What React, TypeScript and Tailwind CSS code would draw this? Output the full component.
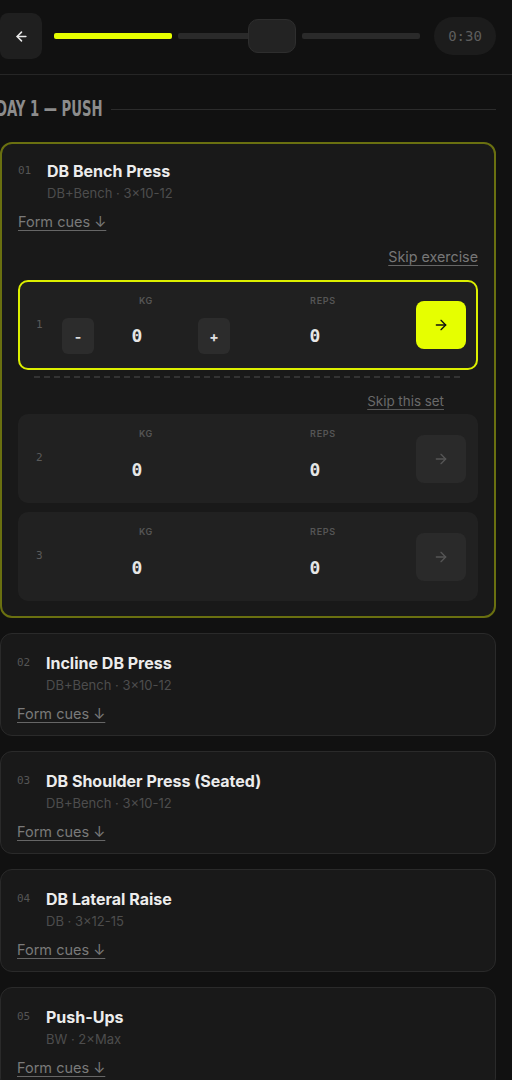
import { ArrowLeft, ArrowRight } from 'lucide-react'

type Exercise = { no: string; name: string; meta: string }

const exercises: Exercise[] = [
    { no: '01', name: 'DB Bench Press', meta: 'DB+Bench · 3×10-12' },
    { no: '02', name: 'Incline DB Press', meta: 'DB+Bench · 3×10-12' },
    { no: '03', name: 'DB Shoulder Press (Seated)', meta: 'DB+Bench · 3×10-12' },
    { no: '04', name: 'DB Lateral Raise', meta: 'DB · 3×12-15' },
    { no: '05', name: 'Push-Ups', meta: 'BW · 2×Max' },
]

const mono = "font-['DejaVu_Sans_Mono','Liberation_Mono',monospace]"

function ExerciseHeader({ ex }: { ex: Exercise }) {
    return (
        <div>
            <div className="flex items-center">
                <span className={`w-[29px] text-[11px] text-[#555] ${mono}`}>{ex.no}</span>
                <span className="text-[16px] leading-[20px] font-bold text-[#ececec]">{ex.name}</span>
            </div>
            <div className="mt-[4px] pl-[29px] text-[13px] leading-[16px] text-[#4d4d4d]">{ex.meta}</div>
            <div className="mt-[12px] text-[14.5px] leading-[18px] text-[#7a7a7a] underline underline-offset-[3px] decoration-[#666]">
                Form cues ↓
            </div>
        </div>
    )
}

function Stepper({ sign, show }: { sign: string; show: boolean }) {
    return (
        <div
            className={`flex h-[36px] w-[32px] items-center justify-center rounded-[6px] bg-[#2c2c2c] text-[14px] font-bold text-[#e0e0e0] ${show ? '' : 'invisible'}`}
        >
            {sign}
        </div>
    )
}

function SetRow({ n, active }: { n: number; active?: boolean }) {
    return (
        <div
            className={`flex items-center rounded-[10px] border-2 pl-[16px] pr-[10px] ${
                active ? 'h-[90px] border-[#dcef00] bg-[#202020]' : 'h-[89px] border-transparent bg-[#212121]'
            }`}
        >
            <span className={`w-[26px] text-[11px] text-[#5a5a5a] ${mono}`}>{n}</span>
            <div className="flex w-[168px] flex-col pb-[2px]">
                <span className="text-center text-[9px] font-semibold tracking-[0.08em] text-[#555]">KG</span>
                <div className="mt-[11px] flex items-center">
                    <Stepper sign="-" show={!!active} />
                    <span className={`flex-1 pr-[18px] text-center text-[18px] leading-[22px] font-bold text-[#e6e6e6] ${mono}`}>0</span>
                    <Stepper sign="+" show={!!active} />
                </div>
            </div>
            <div className="flex flex-1 flex-col pb-[2px]">
                <span className="text-center text-[9px] font-semibold tracking-[0.08em] text-[#555]">REPS</span>
                <div className="mt-[11px] flex h-[36px] items-center justify-center">
                    <span className={`pr-[16px] text-[18px] leading-[22px] font-bold text-[#e6e6e6] ${mono}`}>0</span>
                </div>
            </div>
            <div
                className={`flex h-[48px] w-[50px] items-center justify-center rounded-[8px] ${
                    active ? 'bg-[#e6ff00] text-[#111]' : 'bg-[#2a2a2a] text-[#555]'
                }`}
            >
                <ArrowRight size={16} strokeWidth={2} />
            </div>
        </div>
    )
}

export default function App() {
    return (
        <div className="min-h-screen w-[512px] overflow-hidden bg-[#111111] font-['Inter','Noto_Sans',sans-serif]">
            {/* top bar */}
            <div className="flex h-[75px] items-center border-b border-[#262626] pr-4 pb-[2px]">
                <button className="flex h-[46px] w-[42px] items-center justify-center rounded-r-[10px] rounded-l-[8px] bg-[#1f1f1f] text-[#e8e8e8]">
                    <ArrowLeft size={15} strokeWidth={2.5} />
                </button>
                <div className="relative ml-[12px] flex w-[366px] items-center gap-[6px]">
                    <div className="h-[6px] flex-1 rounded-[2px] bg-[#e6ff00]" />
                    <div className="h-[6px] flex-1 rounded-[2px] bg-[#2a2a2a]" />
                    <div className="h-[6px] flex-1 rounded-[2px] bg-[#2a2a2a]" />
                    <div className="absolute top-1/2 left-[194px] h-[34px] w-[48px] -translate-y-1/2 rounded-[10px] border border-[#2e2e2e] bg-[#232323]" />
                </div>
                <div className={`ml-auto flex h-[38px] w-[62px] items-center justify-center rounded-full bg-[#1c1c1c] text-[14px] text-[#5e5e5e] ${mono}`}>
                    0:30
                </div>
            </div>

            {/* day heading */}
            <div className="mt-[22px] flex items-center gap-3 pr-4">
                <div className="-ml-[4px] w-[103px] shrink-0 whitespace-nowrap">
                    <span className="inline-block origin-left scale-x-[0.7] font-['DejaVu_Sans',sans-serif] font-stretch-condensed text-[21px] leading-[24px] font-bold text-[#8c8c8c]">
                        DAY 1 — PUSH
                    </span>
                </div>
                <div className="h-px flex-1 bg-[#2c2c2c]" />
            </div>

            <div className="mt-[20px] flex flex-col gap-[15px] pr-4">
                {/* active exercise */}
                <div className="rounded-[12px] border-2 border-[#6a7010] bg-[#191919] px-4 pt-[17px] pb-[15px]">
                    <ExerciseHeader ex={exercises[0]} />
                    <div className="mt-[18px] text-right text-[14.3px] leading-[16px] text-[#777] underline underline-offset-[3px] decoration-[#666]">
                        Skip exercise
                    </div>
                    <div className="mt-[15px]">
                        <SetRow n={1} active />
                    </div>
                    <div className="mx-4 mt-[6px] h-[2px] bg-[repeating-linear-gradient(90deg,#333_0_6px,transparent_6px_10px)]" />
                    <div className="mt-[15px] pr-[34px] text-right text-[13.4px] leading-[16px] text-[#6a6a6a] underline underline-offset-[3px] decoration-[#5a5a5a]">
                        Skip this set
                    </div>
                    <div className="mt-[5px] flex flex-col gap-[9px]">
                        <SetRow n={2} />
                        <SetRow n={3} />
                    </div>
                </div>

                {exercises.slice(1).map((ex) => (
                    <div key={ex.no} className="rounded-[12px] border border-[#2a2a2a] bg-[#191919] px-4 pt-[19px] pb-[12px]">
                        <ExerciseHeader ex={ex} />
                    </div>
                ))}
            </div>
        </div>
    )
}
